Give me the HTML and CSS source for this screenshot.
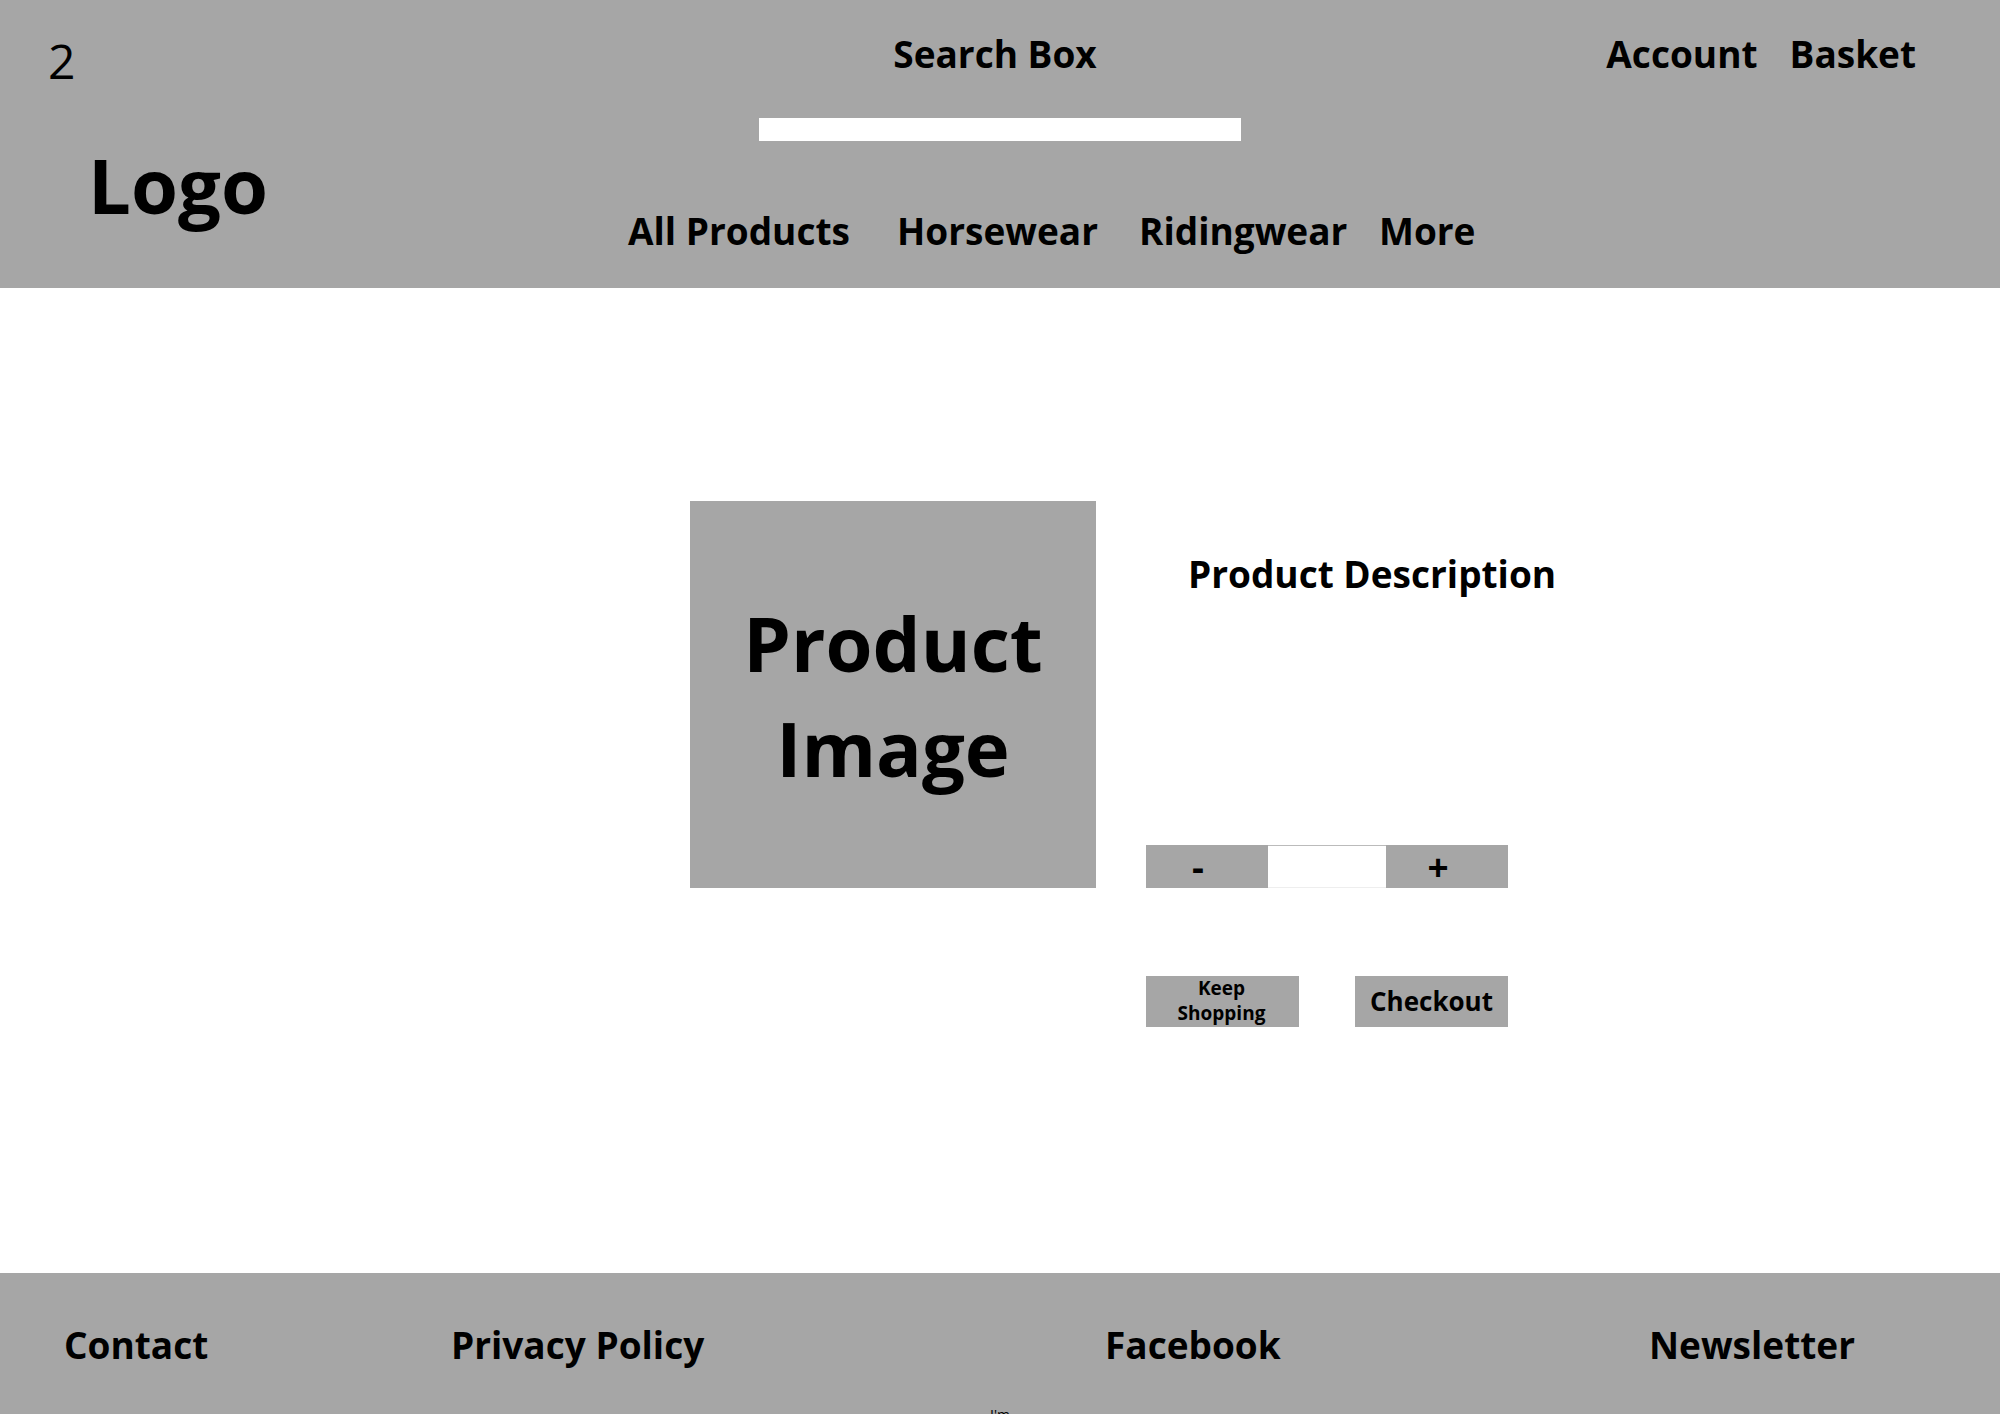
FILE: index.html
```html
<!DOCTYPE html>
<html lang="en">
<head>
<meta charset="utf-8">
<title>Product page</title>
<link rel="stylesheet" href="styles.css">
</head>
<body>
<header class="header">
  <div class="brand">
    <span class="page-number">2</span>
    <a class="logo" href="#">Logo</a>
  </div>
  <div class="center">
    <form class="search">
      <label class="search-label" for="search">Search Box</label>
      <input id="search" class="search-input" type="text">
    </form>
    <nav class="nav">
      <a href="#">All Products</a>
      <a href="#">Horsewear</a>
      <a href="#">Ridingwear</a>
      <a href="#">More</a>
    </nav>
  </div>
  <nav class="user">
    <a href="#">Account</a>
    <a href="#">Basket</a>
  </nav>
</header>
<main class="main">
  <div class="product-image">Product Image</div>
  <section class="details">
    <h1 class="description">Product Description</h1>
    <div class="quantity">
      <button class="step" type="button">-</button>
      <input class="amount" type="text" aria-label="Quantity">
      <button class="step" type="button">+</button>
    </div>
    <div class="actions">
      <button class="action keep" type="button">Keep Shopping</button>
      <button class="action checkout" type="button">Checkout</button>
    </div>
  </section>
</main>
<footer class="footer">
  <nav class="footer-links">
    <a href="#">Contact</a>
    <a href="#">Privacy Policy</a>
    <a href="#">Facebook</a>
    <a href="#">Newsletter</a>
  </nav>
  <p class="note">I'm</p>
</footer>
</body>
</html>
```
FILE: styles.css
```css
* {
  box-sizing: border-box;
}

body {
  margin: 0;
  min-height: 100vh;
  display: flex;
  flex-direction: column;
  background: #fff;
  color: #000;
  font: 700 37px/56px "Open Sans", "Noto Sans", sans-serif;
}

a {
  color: inherit;
  text-decoration: none;
  white-space: nowrap;
}

button,
input {
  margin: 0;
  padding: 0;
  border: 0;
  border-radius: 0;
  font: inherit;
  color: inherit;
}

.header {
  display: grid;
  grid-template-columns: 527fr 946fr 527fr;
  padding: 26px 0 29px;
  background: #a6a6a6;
}

.brand {
  display: flex;
  flex-direction: column;
  align-items: flex-start;
  gap: 40px;
  padding-top: 3px;
}

.page-number {
  padding-left: 48px;
  font-size: 48px;
  font-weight: 400;
  line-height: 64px;
}

.logo {
  padding-left: 88px;
  font-size: 76px;
  line-height: 104px;
}

.center {
  display: flex;
  flex-direction: column;
  gap: 62px;
}

.search {
  display: flex;
  flex-direction: column;
  align-items: center;
  gap: 36px;
}

.search-label {
  padding-right: 10px;
}

.search-input {
  width: 482px;
  height: 23px;
  background: #fff;
}

.nav {
  display: grid;
  grid-template-columns: 269px 242px 240px 94px;
  justify-content: end;
}

.user {
  display: flex;
  justify-content: flex-end;
  gap: 32px;
  padding-right: 84px;
}

.main {
  flex: 1;
  display: flex;
  align-items: flex-start;
  gap: 50px;
  padding: 213px 0 213px 34.5%;
}

.product-image {
  display: grid;
  place-items: center;
  width: 406px;
  height: 387px;
  padding: 0 40px;
  background: #a6a6a6;
  font-size: 76px;
  line-height: 105px;
  text-align: center;
}

.details {
  display: flex;
  flex-direction: column;
  padding-top: 45px;
}

.description {
  margin: 0;
  padding-left: 42px;
  font: inherit;
  white-space: nowrap;
}

.quantity {
  display: flex;
  width: 362px;
  height: 43px;
  margin-top: 243px;
}

.step {
  width: 122px;
  padding-right: 18px;
  background: #a6a6a6;
  line-height: 43px;
}

.amount {
  width: 118px;
  border-top: 1px solid #bbb;
  border-bottom: 1px solid #eee;
  background: #fff;
  text-align: center;
}

.actions {
  display: flex;
  justify-content: space-between;
  width: 362px;
  margin-top: 88px;
}

.action {
  width: 153px;
  height: 51px;
  background: #a6a6a6;
}

.keep {
  padding: 0 28px 4px 26px;
  font-size: 19px;
  line-height: 25px;
}

.checkout {
  font-size: 26px;
  line-height: 51px;
}

.footer {
  padding-top: 44px;
  background: #a6a6a6;
}

.footer-links {
  display: grid;
  grid-template-columns: 387fr 654fr 544fr 351fr;
  padding-left: 64px;
}

.note {
  height: 8px;
  margin: 33px 0 0;
  overflow: hidden;
  font-size: 14px;
  font-weight: 400;
  line-height: 18px;
  text-align: center;
}
```
